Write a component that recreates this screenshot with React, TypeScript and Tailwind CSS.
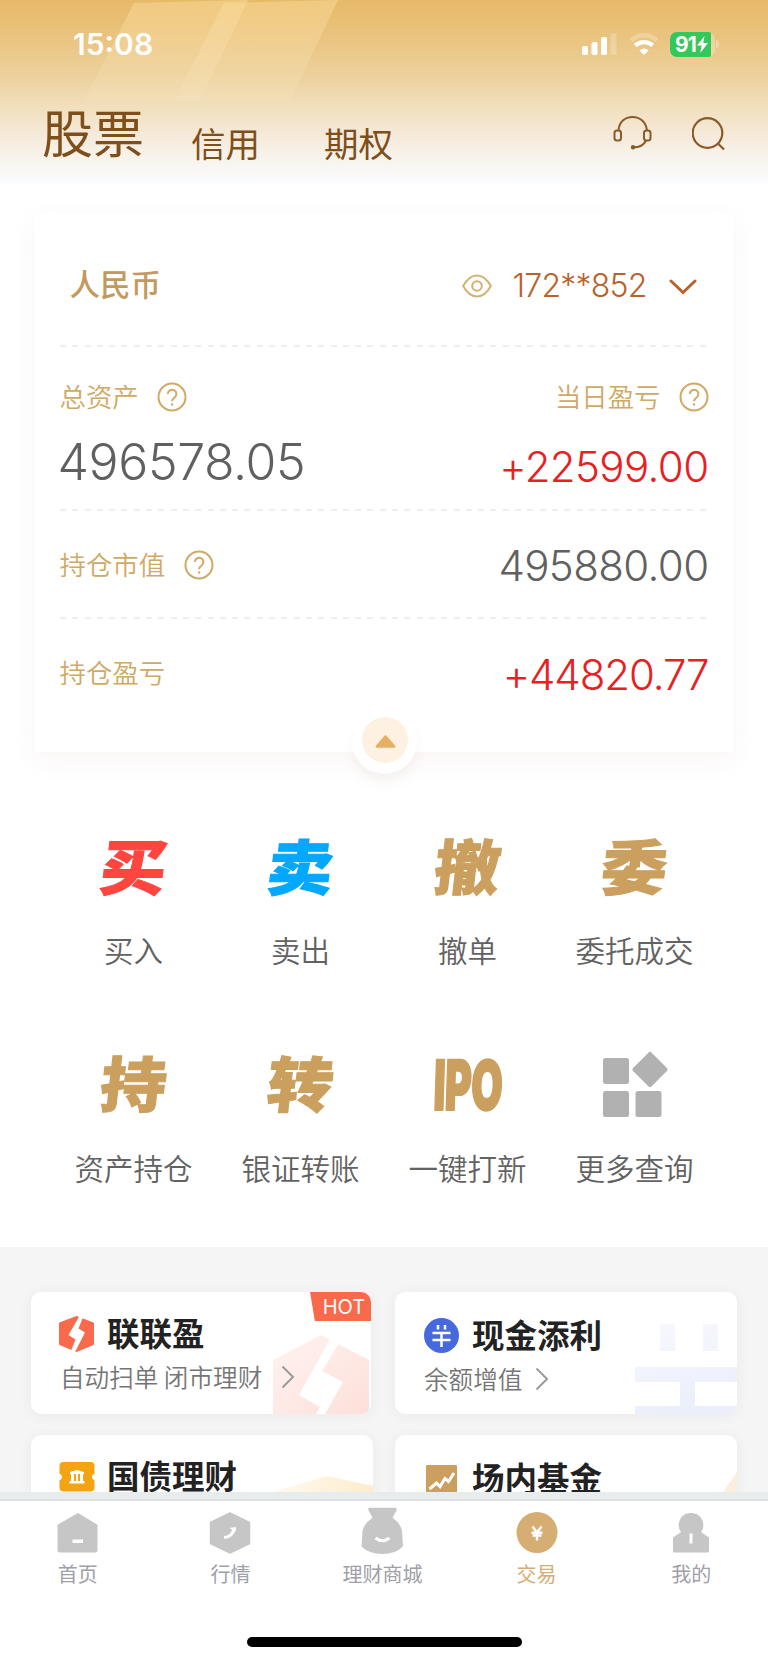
import type { ReactNode } from "react";

const cjk = "font-['Noto_Sans_CJK_SC',sans-serif]";
const num = "font-['Inter',sans-serif] font-light";

function StatusBar() {
  return (
    <div className="flex h-[88px] items-center pl-[73px] pr-[53px] text-white">
      <span className="font-['Inter',sans-serif] text-[30px] font-semibold leading-none">15:08</span>
      <svg className="ml-auto" width="36" height="22" viewBox="0 0 36 22" fill="#fff">
        <rect x="0" y="13" width="6" height="9" rx="1.8" />
        <rect x="9.5" y="9" width="6" height="13" rx="1.8" />
        <rect x="19" y="4" width="6" height="18" rx="1.8" />
        <rect x="28.5" y="0" width="6" height="22" rx="1.8" opacity=".22" />
      </svg>
      <svg className="ml-[11px]" width="30" height="22" viewBox="0 0 30 22" fill="none">
        <path d="M2 7.5A19 19 0 0 1 28 7.5" stroke="#fff" strokeOpacity=".25" strokeWidth="4.5" />
        <path d="M6.3 12.4A13 13 0 0 1 23.7 12.4" stroke="#fff" strokeWidth="4.2" />
        <path d="M15 22l-4.6-4.6a6.6 6.6 0 0 1 9.2 0z" fill="#fff" />
      </svg>
      <div className="ml-[11px] flex h-[25px] w-[45px] items-center overflow-hidden rounded-[7px] bg-white/25">
        <div className="flex h-full w-[41px] items-center bg-[#34c759] pl-[5px]">
          <span className="font-['Inter',sans-serif] text-[21px] font-bold leading-none tracking-[-0.8px]">91</span>
          <svg className="ml-px shrink-0" width="11" height="17" viewBox="0 0 11 17" fill="#fff">
            <path d="M7.5 0L0 9.5h4.6L3.2 17 11 7H6.2z" />
          </svg>
        </div>
      </div>
      <div className="-mr-[4px] ml-[1px] h-[8px] w-[3px] rounded-r-full bg-white/30" />
    </div>
  );
}

function Header() {
  return (
    <header className="relative h-[185px] bg-[linear-gradient(180deg,#e7ba69_0%,#e9bf74_12%,#ecd09b_40%,#f1dfbd_58%,#f5e9d8_72%,#f8f5f0_88%,#fafbfe_98%,#ffffff_100%)]">
      <svg className="absolute left-0 top-0" width="380" height="110" viewBox="0 0 380 110">
        <defs>
          <linearGradient id="beam" x1="0" y1="0" x2="0" y2="1">
            <stop offset="0" stopColor="#fde0a0" stopOpacity=".42" />
            <stop offset="1" stopColor="#fff0d0" stopOpacity=".1" />
          </linearGradient>
        </defs>
        <path d="M134 3L248 0 200 101H84z" fill="url(#beam)" />
        <path d="M224 3L338 0 290 101H174z" fill="url(#beam)" />
      </svg>
      <div className="relative">
        <StatusBar />
        <nav className={`flex items-start pl-[42px] pr-[42px] text-[#7e4f1b] ${cjk}`}>
          <span className="mt-[18px] text-[51px] leading-none">股票</span>
          <span className="ml-[47px] mt-[37px] text-[34.500px] leading-none">信用</span>
          <span className="ml-[64px] mt-[37px] text-[34.500px] leading-none">期权</span>
          <svg className="ml-auto mt-[27px]" width="40" height="36" viewBox="0 0 40 36" fill="none" stroke="#8a5a28" strokeWidth="2">
            <path d="M5.5 15.5C6 7 12 2 19.500 2S33 7 34 15.500" />
            <rect x="1.500" y="15.500" width="6.500" height="10" rx="2.500" />
            <rect x="31" y="15.500" width="6.500" height="10" rx="2.500" />
            <path d="M33 25.500C31 30 26.500 32.500 19.500 32.500" />
            <circle cx="20" cy="32.300" r="1.200" fill="#8a5a28" />
          </svg>
          <svg className="ml-[39px] mt-[28px]" width="34" height="36" viewBox="0 0 34 36" fill="none" stroke="#8a5a28" strokeWidth="2.200">
            <circle cx="15.500" cy="17" r="14.800" />
            <path d="M26 27.500l6 6" />
          </svg>
        </nav>
      </div>
    </header>
  );
}

function Help({ className }: { className: string }) {
  return (
    <svg className={className} width="30" height="30" viewBox="0 0 30 30" fill="none" stroke="#cfa965" strokeWidth="2">
      <circle cx="15" cy="15" r="13.500" />
      <path d="M10.800 12a4.300 4.300 0 1 1 6.800 3.500c-1.700 1.200-2.500 1.900-2.500 3.700" />
      <circle cx="15.100" cy="22.500" r="1.200" fill="#cfa965" stroke="none" />
    </svg>
  );
}

function Divider() {
  return (
    <div className="h-[2px] w-full bg-[repeating-linear-gradient(90deg,#eeeeee_0_6px,transparent_6px_12.3px)]" />
  );
}

const rowLabel = "text-[26.4px] font-[350] leading-none text-[#cfa965]";

function AssetCard() {
  return (
    <section className="relative mx-[35px] mt-[28px] h-[539px] bg-white px-[24.500px] shadow-[0_8px_26px_rgba(150,60,60,0.05)]">
      <div className="flex h-[132px] items-center pl-[10px] pr-[12px] pt-[8px]">
        <span className={`text-[30.500px] font-medium leading-none text-[#c29a60] ${cjk}`}>人民币</span>
        <svg className="ml-auto mt-[5px]" width="30" height="24" viewBox="0 0 30 24" fill="none" stroke="#d3b271" strokeWidth="2">
          <path d="M1.200 12C5 5 10 1.500 15 1.500S25 5 28.800 12C25 19 20 22.500 15 22.500S5 19 1.200 12z" />
          <circle cx="15" cy="12" r="4.800" />
        </svg>
        <span className="ml-[21px] mt-[5px] font-['Inter',sans-serif] text-[32px] font-light leading-none tracking-[-0.8px] text-[#b9622d]">172**852</span>
        <svg className="ml-[22px] mt-[7px]" width="28" height="16" viewBox="0 0 28 16" fill="none" stroke="#b9622d" strokeWidth="3" strokeLinecap="round">
          <path d="M2 2l12 11.500L26 2" />
        </svg>
      </div>
      <Divider />
      <div className="flex h-[162px] justify-between">
        <div>
          <div className="mt-[34px] flex h-[30px] items-center">
            <span className={`${rowLabel} ${cjk}`}>总资产</span>
            <Help className="ml-[18px] mt-[2px]" />
          </div>
          <div className={`-ml-[2px] mt-[26px] text-[50px] leading-none tracking-[-0.4px] text-[#606060] ${num}`}>496578.05</div>
        </div>
        <div className="flex flex-col items-end">
          <div className="mt-[34px] flex h-[30px] items-center">
            <span className={`${rowLabel} ${cjk}`}>当日盈亏</span>
            <Help className="ml-[18px] mt-[2px]" />
          </div>
          <div className={`mt-[35px] text-[42px] leading-none tracking-[-0.600px] text-[#e8201f] ${num}`}>+22599.00</div>
        </div>
      </div>
      <Divider />
      <div className="flex h-[106px] items-center">
        <span className={`${rowLabel} ${cjk}`}>持仓市值</span>
        <Help className="ml-[19px] mt-[2px]" />
        <span className={`ml-auto mt-[3px] text-[42px] leading-none tracking-[-0.600px] text-[#606060] ${num}`}>495880.00</span>
      </div>
      <Divider />
      <div className="flex h-[108px] items-center justify-between">
        <span className={`-mt-[2px] ${rowLabel} ${cjk}`}>持仓盈亏</span>
        <span className={`mt-[3px] text-[42px] leading-none tracking-[-1.100px] text-[#e8201f] ${num}`}>+44820.77</span>
      </div>
      <div className="absolute bottom-[-22px] left-[317px] flex size-[65px] items-center justify-center rounded-full bg-white pb-[3px] shadow-[0_10px_16px_-4px_rgba(150,60,60,0.09)]">
        <div className="flex size-[46px] items-center justify-center rounded-full bg-[#fef1e1]">
          <svg className="ml-[2px] mt-[3px]" width="21" height="13" viewBox="0 0 21 13" fill="#e5b063">
            <path d="M9 1.200a2 2 0 0 1 3 0l8 9.300c.7 1 .2 2.200-1 2.200H2c-1.200 0-1.700-1.200-1-2.200z" />
          </svg>
        </div>
      </div>
    </section>
  );
}

function Action({ label, children }: { label: string; children: ReactNode }) {
  return (
    <div className="flex flex-col items-center">
      <div className="flex h-[68px] w-[80px] items-center justify-center">{children}</div>
      <span className={`mt-[35px] text-[29.500px] font-[350] leading-none text-[#626262] ${cjk}`}>{label}</span>
    </div>
  );
}

function Glyph({ text, color }: { text: string; color: string }) {
  return (
    <span className={`-mt-[5px] block -skew-x-6 scale-x-110 text-[60px] font-black leading-none [-webkit-text-stroke:1px_currentColor] ${color} ${cjk}`}>{text}</span>
  );
}

function Actions() {
  return (
    <section className="grid grid-cols-4 gap-y-[85px] px-[50px] pt-[80px]">
      <Action label="买入"><Glyph text="买" color="text-[#ff4540]" /></Action>
      <Action label="卖出"><Glyph text="卖" color="text-[#00a8ff]" /></Action>
      <Action label="撤单"><Glyph text="撤" color="text-[#cb9f5e]" /></Action>
      <Action label="委托成交"><Glyph text="委" color="text-[#cb9f5e]" /></Action>
      <Action label="资产持仓"><Glyph text="持" color="text-[#cb9f5e]" /></Action>
      <Action label="银证转账"><Glyph text="转" color="text-[#cb9f5e]" /></Action>
      <Action label="一键打新">
        <span className="mt-[4px] block -skew-x-3 scale-x-[0.59] font-['Inter',sans-serif] text-[69px] font-black leading-none tracking-[-1px] text-[#cb9f5e] [-webkit-text-stroke:2px_currentColor]">IPO</span>
      </Action>
      <Action label="更多查询">
        <svg width="68" height="68" viewBox="0 0 68 68" fill="#b1b1b1">
          <rect x="2" y="8" width="26" height="26" rx="2.500" />
          <rect x="2" y="41" width="26" height="26" rx="2.500" />
          <rect x="34.500" y="41" width="26" height="26" rx="2.500" />
          <rect x="36" y="6.500" width="26" height="26" rx="2" transform="rotate(45 49 19.500)" />
        </svg>
      </Action>
    </section>
  );
}

function Chevron({ className }: { className: string }) {
  return (
    <svg className={className} width="14" height="24" viewBox="0 0 14 24" fill="none" stroke="#9b9b9b" strokeWidth="2">
      <path d="M1.500 1.500L12 12 1.500 22.500" />
    </svg>
  );
}

const title = "text-[32.500px] font-bold leading-none text-[#222]";
const sub = "text-[24.600px] font-[350] leading-none text-[#757575]";
const shade = "shadow-[0_2px_14px_rgba(120,50,50,0.06)]";

function Products() {
  return (
    <section className={`mt-[65px] grid h-[245px] grid-cols-[340px_342px] gap-x-[24px] gap-y-[21px] overflow-hidden bg-[#f5f5f5] pl-[31px] pt-[45px] ${cjk}`}>
      <div className={`relative h-[122px] overflow-hidden rounded-[10px] bg-white ${shade}`}>
        <svg className="absolute bottom-0 right-[2px]" width="96" height="80" viewBox="0 0 96 80">
          <defs>
            <linearGradient id="hex" x1="0" y1="0" x2="1" y2="1">
              <stop offset="0" stopColor="#fff4f1" />
              <stop offset="1" stopColor="#fddfd9" />
            </linearGradient>
          </defs>
          <path d="M48 1L0 26v54h96V26z" fill="url(#hex)" />
          <path d="M58 3l8 6-17 28 21 11-18 32h-9l4-7-21-12z" fill="#fff" />
        </svg>
        <div className="absolute right-0 top-0 flex h-[29px] w-[61px] items-center justify-center bg-[#f9694c] pl-[7px] font-['Inter',sans-serif] text-[20px] leading-none text-white [clip-path:polygon(0_0,100%_0,100%_100%,8%_100%)]">HOT</div>
        <div className="relative flex items-center pl-[28px] pt-[21px]">
          <svg className="mt-[3px]" width="35" height="36" viewBox="0 0 35 36">
            <path d="M17.500.5L34.500 7v21.500L17.500 35.500.5 28.500V7z" fill="#f9694c" stroke="#f9694c" strokeLinejoin="round" />
            <path d="M20.500 0h4l-5 12.500 6.500 4L16 36h-4.500l5-12.500-7-4.500z" fill="#fff" />
          </svg>
          <span className={`ml-[13px] ${title}`}>联联盈</span>
        </div>
        <div className="relative mt-[11px] flex items-center pl-[29px]">
          <span className={sub}>自动扫单 闭市理财</span>
          <Chevron className="ml-[19px] mt-[2px]" />
        </div>
      </div>

      <div className={`relative h-[122px] overflow-hidden rounded-[10px] bg-white ${shade}`}>
        <svg className="absolute bottom-0 right-0" width="102" height="90" viewBox="0 0 102 90">
          <defs>
            <linearGradient id="coin" x1="0" y1="0" x2=".3" y2="1">
              <stop offset="0" stopColor="#f8f9fe" />
              <stop offset="1" stopColor="#ebeffb" />
            </linearGradient>
          </defs>
          <path d="M25 0h15v27H25zM68 0h15v27H68zM0 43h102v15H60v24h42v8H0v-8h45V58H0z" fill="url(#coin)" />
        </svg>
        <div className="relative flex items-center pl-[29px] pt-[23px]">
          <svg className="mt-[3px]" width="35" height="35" viewBox="0 0 35 35" fill="none" stroke="#fff">
            <circle cx="17.500" cy="17.500" r="17.500" fill="#4769de" stroke="none" />
            <path d="M14 7v4.500M21 7v4.500" strokeWidth="2.500" />
            <path d="M8.500 15h18M8.500 22h18M17.500 15v14" strokeWidth="2.500" />
          </svg>
          <span className={`ml-[13px] ${title}`}>现金添利</span>
        </div>
        <div className="relative mt-[12px] flex items-center pl-[29px]">
          <span className={sub}>余额增值</span>
          <Chevron className="ml-[13px] mt-[2px]" />
        </div>
      </div>

      <div className={`relative h-[122px] w-[342px] overflow-hidden rounded-[10px] bg-white ${shade}`}>
        <svg className="absolute right-0 top-[40px]" width="100" height="40" viewBox="0 0 100 40">
          <defs>
            <linearGradient id="sand" x1="0" y1="0" x2="1" y2="0">
              <stop offset="0" stopColor="#fffaf0" />
              <stop offset="1" stopColor="#fdeccb" />
            </linearGradient>
          </defs>
          <path d="M54 1l46 10v29H0V17z" fill="url(#sand)" />
        </svg>
        <div className="relative flex items-center pl-[28px] pt-[23px]">
          <svg className="mt-[4px]" width="36" height="30" viewBox="0 0 36 30">
            <rect x=".5" width="35" height="29.500" rx="4" fill="#f4a313" />
            <circle cx="0" cy="15" r="3" fill="#fff" />
            <circle cx="36" cy="15" r="3" fill="#fff" />
            <path d="M11 12V10l7-2 7 2v2h-1v7h1.500v2.500h-15V19H12v-7z" fill="#fff" />
            <path d="M16 12v7M20 12v7" stroke="#f4a313" strokeWidth="2" />
          </svg>
          <span className={`ml-[12px] ${title}`}>国债理财</span>
        </div>
      </div>

      <div className={`relative h-[122px] overflow-hidden rounded-[10px] bg-white ${shade}`}>
        <svg className="absolute right-0 top-[36px]" width="20" height="30" viewBox="0 0 20 30">
          <path d="M20 1v29H0z" fill="#faeedf" />
        </svg>
        <div className="relative flex items-center pl-[31px] pt-[24px]">
          <svg className="mt-[6px]" width="31" height="31" viewBox="0 0 31 31" fill="none">
            <rect width="31" height="31" rx="1" fill="#cb9f5e" />
            <path d="M3.500 24l7-6 3.500 3.500 5-8 3.500 3L28 8" stroke="#fff" strokeWidth="3" />
          </svg>
          <span className={`ml-[15px] ${title}`}>场内基金</span>
        </div>
      </div>
    </section>
  );
}

function Tab({ label, active, shift, children }: { label: string; active?: boolean; shift?: string; children: ReactNode }) {
  return (
    <div className={`flex flex-col items-center ${shift ?? ""}`}>
      <svg className="mt-[6px]" width="44" height="48" viewBox="0 0 44 48" fill={active ? "#d6ad72" : "#c6c6c6"}>{children}</svg>
      <span className={`mt-[9px] text-[20px] leading-none ${active ? "text-[#d6ad72]" : "text-[#a0a0a8]"}`}>{label}</span>
    </div>
  );
}

function TabBar() {
  return (
    <footer className={`h-[170px] border-t-[7px] border-[#e8ecec] bg-white ${cjk}`}>
      <div className="h-[2px] bg-[#dde1e1]" />
      <div className="grid h-[136px] grid-cols-5">
        <Tab label="首页" shift="pl-[2px]">
          <path d="M22 6.500L41 18v25.500a1.500 1.500 0 0 1-1.500 1.500h-36a1.500 1.500 0 0 1-1.500-1.500V18z" stroke="#c6c6c6" strokeLinejoin="round" />
          <rect x="16.500" y="32.500" width="10.500" height="3.500" fill="#fff" />
        </Tab>
        <Tab label="行情">
          <path d="M22 6L41.500 15.500v21L22 46 2.500 36.500v-21z" stroke="#c6c6c6" strokeWidth="1.500" strokeLinejoin="round" />
          <path d="M16 30.500c5.500 0 9.500-4 10-9" fill="none" stroke="#fff" strokeWidth="3" />
          <path d="M21.500 21l6.500-1-.5 5z" fill="#fff" />
        </Tab>
        <Tab label="理财商城" shift="-ml-[3px]">
          <path d="M9.500.8h26q2 .5 1 2.500l-4 7.500q8 5.500 9.500 13l1 15.500Q36 47 22.500 47T1.500 39.500l1-15.500q1.500-7.500 10-13.200l-4-7.500q-1-2 1-2.500z" />
          <path d="M15.500 31q7 5.500 14 0" fill="none" stroke="#fff" strokeWidth="3" />
        </Tab>
        <Tab label="交易" active shift="-ml-[2px]">
          <circle cx="22" cy="25.500" r="20.500" />
          <path d="M17.500 19.500l4.500 6 4.500-6M22 25v8.500M16.500 25.800h11M17.500 28.500h9" fill="none" stroke="#fff" strokeWidth="2.500" />
        </Tab>
        <Tab label="我的">
          <path d="M22 6a12 12 0 0 1 10 19l8 5.500v13.500a1.500 1.500 0 0 1-1.500 1.500h-33a1.500 1.500 0 0 1-1.500-1.500V30.500L12 25A12 12 0 0 1 22 6z" />
          <rect x="20.500" y="26.500" width="3" height="10" fill="#fff" />
        </Tab>
      </div>
      <div className="mx-auto h-[10px] w-[275px] rounded-full bg-black" />
    </footer>
  );
}

export default function App() {
  return (
    <main className="h-[1662px] w-[768px] overflow-hidden bg-white">
      <Header />
      <AssetCard />
      <Actions />
      <Products />
      <TabBar />
    </main>
  );
}
